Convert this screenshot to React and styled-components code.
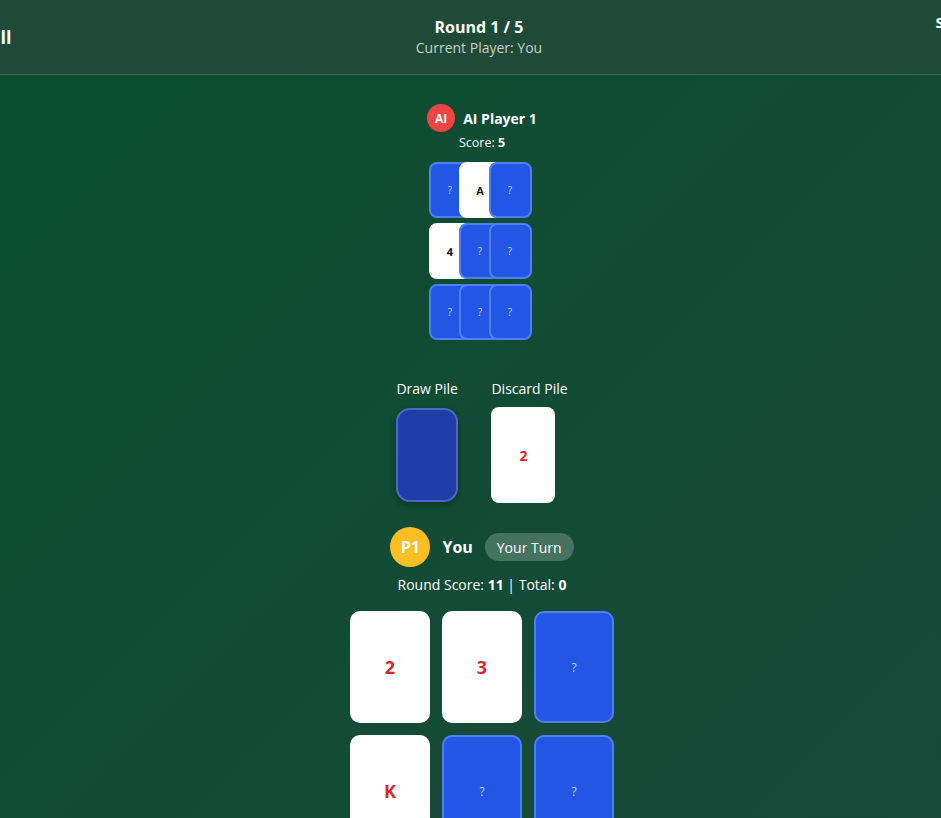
import styled, { createGlobalStyle } from "styled-components";

const GlobalStyle = createGlobalStyle`
  html, body {
    margin: 0;
    padding: 0;
    overflow: hidden;
  }
  body {
    font-family: "Open Sans", "Noto Sans", sans-serif;
    background: linear-gradient(135deg, #0a4f2f 0%, #134b36 55%, #1a4a3b 100%);
    min-height: 818px;
    color: #fff;
  }
`;

const Page = styled.div`
  width: 1042px;
  margin-left: -42px;
  min-height: 818px;
`;

const Header = styled.header`
  height: 74px;
  display: grid;
  grid-template-columns: 1fr auto 1fr;
  align-items: center;
  padding: 0 16px;
  background: #1e4a37;
  border-bottom: 1px solid rgba(255, 255, 255, 0.14);
`;

const HeaderSide = styled.div`
  justify-self: ${(p) => (p.$right ? "end" : "start")};
  align-self: ${(p) => (p.$right ? "start" : "center")};
  padding-top: ${(p) => (p.$right ? "12px" : "0")};
  font-weight: 700;
  font-size: ${(p) => (p.$right ? "15px" : "18px")};
  white-space: nowrap;
`;

const HeaderCenter = styled.div`
  text-align: center;
`;

const RoundTitle = styled.div`
  font-size: 16px;
  font-weight: 700;
  line-height: 22px;
`;

const Subtitle = styled.div`
  font-size: 14px;
  line-height: 20px;
  color: rgba(255, 255, 255, 0.75);
`;

const Main = styled.main`
  display: flex;
  flex-direction: column;
  align-items: center;
  padding-top: 29px;
  padding-left: 6px;
`;

const OpponentRow = styled.div`
  display: flex;
  align-items: center;
  gap: 8px;
`;

const Avatar = styled.div`
  width: ${(p) => p.$size}px;
  height: ${(p) => p.$size}px;
  border-radius: 50%;
  background: ${(p) => p.$color};
  display: flex;
  align-items: center;
  justify-content: center;
  font-weight: 700;
  font-size: ${(p) => (p.$size > 30 ? "16px" : "12px")};
  color: #fff;
`;

const OpponentName = styled.div`
  font-size: 14px;
  font-weight: 700;
`;

const OpponentScore = styled.div`
  margin-top: 2px;
  font-size: 12.5px;
  line-height: 18px;
  b {
    font-weight: 700;
  }
`;

const MiniGrid = styled.div`
  margin-top: 10px;
  margin-right: 4px;
  display: flex;
  flex-direction: column;
  gap: 5px;
`;

const MiniRow = styled.div`
  display: flex;
`;

const CardBase = styled.div`
  display: flex;
  align-items: center;
  justify-content: center;
  box-sizing: border-box;
  font-weight: 700;
  background: ${(p) => (p.$up ? "#ffffff" : "#2456e6")};
  border: 2px solid ${(p) => (p.$up ? "#ffffff" : "#4f7ff0")};
`;

const MiniCard = styled(CardBase)`
  width: 43px;
  height: 56px;
  border-radius: 8px;
  font-size: ${(p) => (p.$up ? "11px" : "10px")};
  color: ${(p) => (p.$up ? "#111" : "rgba(255,255,255,0.75)")};
  font-weight: ${(p) => (p.$up ? 700 : 400)};
  & + & {
    margin-left: -13px;
  }
`;

const Piles = styled.div`
  margin-top: 40px;
  display: flex;
  gap: 33px;
`;

const PileCol = styled.div`
  display: flex;
  flex-direction: column;
  align-items: flex-start;
  gap: 9px;
`;

const PileLabel = styled.div`
  font-size: 14px;
  line-height: 18px;
`;

const DrawCard = styled.div`
  width: 62px;
  height: 94px;
  margin-top: 1px;
  box-sizing: border-box;
  border-radius: 14px;
  background: #1e3da6;
  border: 2px solid #4a68c4;
  box-shadow: 0 3px 6px rgba(0, 0, 0, 0.3);
`;

const DiscardCard = styled.div`
  width: 64px;
  height: 96px;
  border-radius: 8px;
  background: #fff;
  display: flex;
  align-items: center;
  justify-content: center;
  color: #dc2626;
  font-weight: 700;
  font-size: 14px;
`;

const PlayerRow = styled.div`
  margin-top: 24px;
  display: flex;
  align-items: center;
  gap: 12px;
`;

const PlayerName = styled.div`
  font-size: 16px;
  font-weight: 700;
`;

const TurnBadge = styled.div`
  height: 28px;
  padding: 0 12px;
  border-radius: 14px;
  background: rgba(255, 255, 255, 0.22);
  display: flex;
  align-items: center;
  font-size: 14px;
`;

const ScoreLine = styled.div`
  margin-top: 8px;
  font-size: 14px;
  line-height: 20px;
  b {
    font-weight: 700;
  }
`;

const PlayerGrid = styled.div`
  margin-top: 16px;
  display: grid;
  grid-template-columns: repeat(3, 80px);
  grid-auto-rows: 112px;
  gap: 12px;
`;

const BigCard = styled(CardBase)`
  border-radius: 10px;
  font-size: ${(p) => (p.$up ? "18px" : "12px")};
  font-weight: ${(p) => (p.$up ? 700 : 400)};
  color: ${(p) => (p.$up ? "#dc2626" : "rgba(255,255,255,0.75)")};
`;

const aiCards = [
  [null, "A", null],
  ["4", null, null],
  [null, null, null],
];

const myCards = ["2", "3", null, "K", null, null, null, null, null];

export default function App() {
  return (
    <>
      <GlobalStyle />
      <Page>
        <Header>
          <HeaderSide>Skill</HeaderSide>
          <HeaderCenter>
            <RoundTitle>Round 1 / 5</RoundTitle>
            <Subtitle>Current Player: You</Subtitle>
          </HeaderCenter>
          <HeaderSide $right>Scores</HeaderSide>
        </Header>
        <Main>
          <OpponentRow>
            <Avatar $size={28} $color="#ef4444">AI</Avatar>
            <OpponentName>AI Player 1</OpponentName>
          </OpponentRow>
          <OpponentScore>
            Score: <b>5</b>
          </OpponentScore>
          <MiniGrid>
            {aiCards.map((row, r) => (
              <MiniRow key={r}>
                {row.map((c, i) => (
                  <MiniCard key={i} $up={!!c}>
                    {c || "?"}
                  </MiniCard>
                ))}
              </MiniRow>
            ))}
          </MiniGrid>
          <Piles>
            <PileCol>
              <PileLabel>Draw Pile</PileLabel>
              <DrawCard />
            </PileCol>
            <PileCol>
              <PileLabel>Discard Pile</PileLabel>
              <DiscardCard>2</DiscardCard>
            </PileCol>
          </Piles>
          <PlayerRow>
            <Avatar $size={40} $color="#fbbf24">P1</Avatar>
            <PlayerName>You</PlayerName>
            <TurnBadge>Your Turn</TurnBadge>
          </PlayerRow>
          <ScoreLine>
            Round Score: <b>11</b> | Total: <b>0</b>
          </ScoreLine>
          <PlayerGrid>
            {myCards.map((c, i) => (
              <BigCard key={i} $up={!!c}>
                {c || "?"}
              </BigCard>
            ))}
          </PlayerGrid>
        </Main>
      </Page>
    </>
  );
}
